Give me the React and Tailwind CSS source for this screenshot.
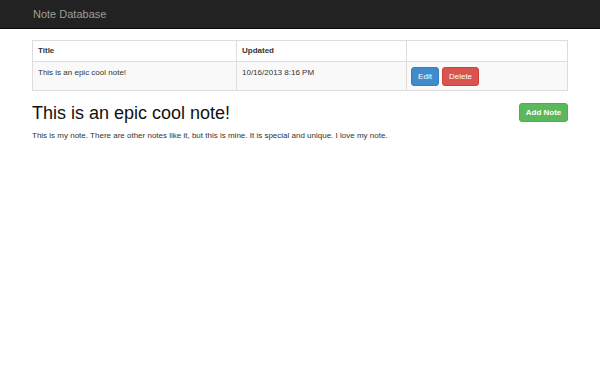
export default function App() {
  return (
    <div className="min-h-screen bg-white font-['Liberation_Sans',Arial,sans-serif] text-[#333]">
      <nav className="h-[29px] bg-[#222] border-b border-[#080808] flex items-center pl-[33px]">
        <span className="text-[11px] text-[#9d9d9d]">Note Database</span>
      </nav>

      <div className="mx-[32px] mt-[11px]">
        <table className="w-full border-collapse border border-[#ddd] text-[8px]">
          <thead>
            <tr className="h-[21px]">
              <th className="w-[204px] border border-[#ddd] px-[5px] text-left font-bold text-[#333]">Title</th>
              <th className="w-[170px] border border-[#ddd] px-[5px] text-left font-bold text-[#333]">Updated</th>
              <th className="border border-[#ddd] px-[5px]"></th>
            </tr>
          </thead>
          <tbody>
            <tr className="h-[29px] bg-[#f9f9f9] align-top">
              <td className="border border-[#ddd] px-[5px] pt-[5px]">This is an epic cool note!</td>
              <td className="border border-[#ddd] px-[5px] pt-[5px]">10/16/2013 8:16 PM</td>
              <td className="border border-[#ddd] px-[4px] pt-[5px]">
                <div className="flex gap-[3px]">
                  <button className="h-[19px] w-[28px] rounded-[3px] bg-[#428bca] border border-[#357ebd] text-white text-[8px]">Edit</button>
                  <button className="h-[19px] w-[37px] rounded-[3px] bg-[#d9534f] border border-[#d43f3a] text-white text-[8px]">Delete</button>
                </div>
              </td>
            </tr>
          </tbody>
        </table>

        <div className="flex items-start justify-between mt-[12px]">
          <h1 className="text-[18px] font-medium text-[#111] leading-[20px]">This is an epic cool note!</h1>
          <button className="h-[19px] w-[49px] rounded-[3px] bg-[#5cb85c] border border-[#4cae4c] text-white text-[8px] font-bold">Add Note</button>
        </div>
        <p className="mt-[7px] text-[8px] text-[#333]">This is my note. There are other notes like it, but this is mine. It is special and unique. I love my note.</p>
      </div>
    </div>
  );
}
